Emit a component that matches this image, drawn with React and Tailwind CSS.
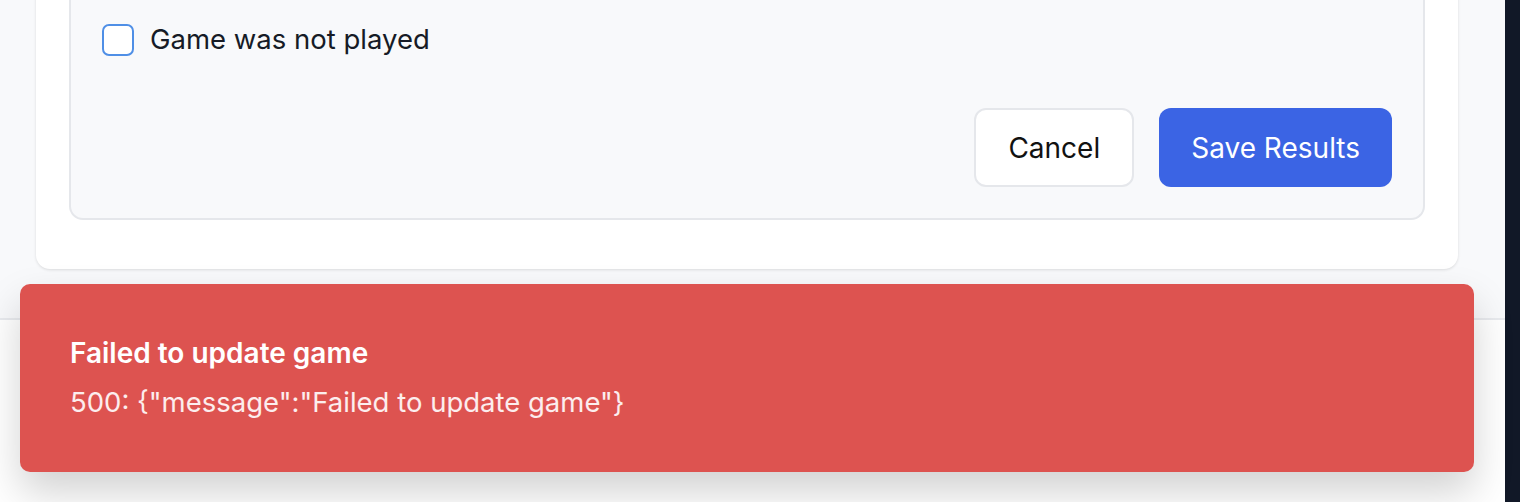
import { useState } from 'react'

function Checkbox({ checked, onChange, label }) {
  return (
    <label className="flex items-center gap-[16px] h-[32px] cursor-pointer">
      <span
        onClick={onChange}
        className="w-[32px] h-[32px] rounded-[7px] border-2 border-[#4f8fe6] bg-white shrink-0"
      />
      <span className="text-[27.5px] text-[#161b26] leading-none">{label}</span>
    </label>
  )
}

export default function App() {
  const [notPlayed, setNotPlayed] = useState(false)

  return (
    <div className="relative flex h-[502px] w-[1520px] overflow-hidden font-['Inter','Noto_Sans',sans-serif]">
      <main className="flex-1 flex flex-col">
        <section className="h-[318px] bg-[#f8f9fb] overflow-hidden flex flex-col justify-end pl-[36px] pr-[47px] pb-[49px]">
          <div className="bg-white rounded-b-[14px] shadow-[0_1px_3px_rgba(0,0,0,0.12)] px-[33px] pb-[49px] pt-[40px]">
            <div className="bg-[#f8f9fb] border-2 border-t-0 border-[#e5e7eb] rounded-b-[14px] px-[31px] pb-[31px] pt-[60px]">
              <Checkbox
                checked={notPlayed}
                onChange={() => setNotPlayed(!notPlayed)}
                label="Game was not played"
              />
              <div className="flex justify-end gap-[25px] mt-[52px]">
                <button className="h-[79px] px-[32px] rounded-[12px] border-2 border-[#e5e7eb] bg-white text-[28px] text-[#111]">
                  Cancel
                </button>
                <button className="h-[79px] px-[32px] rounded-[12px] bg-[#3b64e4] text-[28px] text-white">
                  Save Results
                </button>
              </div>
            </div>
          </div>
        </section>
        <footer className="flex-1 bg-white border-t-2 border-[#e8eaee]" />
      </main>
      <aside className="w-[15px] bg-[#111827]" />

      <div className="absolute left-[20px] top-[284px] w-[1454px] h-[188px] rounded-[10px] bg-[#dd5350] shadow-[0_20px_40px_rgba(0,0,0,0.18)] px-[50px] flex flex-col justify-center">
        <p className="text-[28px] leading-[49px] font-semibold text-white">Failed to update game</p>
        <p className="text-[27.5px] leading-[49px] text-white/90">500: {'{"message":"Failed to update game"}'}</p>
      </div>
    </div>
  )
}
